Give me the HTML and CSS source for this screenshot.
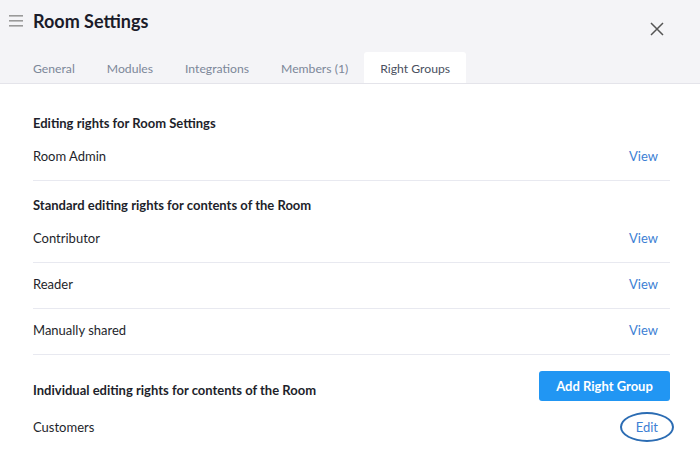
FILE: index.html
```html
<!DOCTYPE html>
<html lang="en">
<head>
    <meta charset="UTF-8">
    <meta name="viewport" content="width=device-width, initial-scale=1.0">
    <title>Room Settings</title>
    <link rel="stylesheet" href="styles.css">
</head>
<body>

<div class="header">
    <div class="title-row">
        <svg class="menu-icon" width="14" height="12" viewBox="0 0 14 12">
            <rect x="0" y="0" width="14" height="1.6" fill="#9a9a9a"/>
            <rect x="0" y="5" width="14" height="1.6" fill="#9a9a9a"/>
            <rect x="0" y="10" width="14" height="1.6" fill="#9a9a9a"/>
        </svg>
        <h1 class="title">Room Settings</h1>
        <svg class="close-icon" width="14" height="14" viewBox="0 0 14 14">
            <path d="M1 1 L13 13 M13 1 L1 13" stroke="#555" stroke-width="1.5"/>
        </svg>
    </div>
    <div class="tabs">
        <div class="tab">General</div>
        <div class="tab">Modules</div>
        <div class="tab">Integrations</div>
        <div class="tab">Members (1)</div>
        <div class="tab active">Right Groups</div>
    </div>
</div>

<div class="content">
    <div class="section">
        <div class="section-title">Editing rights for Room Settings</div>
        <div class="row">
            <span>Room Admin</span>
            <a class="link">View</a>
        </div>
    </div>

    <div class="section">
        <div class="section-title">Standard editing rights for contents of the Room</div>
        <div class="row">
            <span>Contributor</span>
            <a class="link">View</a>
        </div>
        <div class="row">
            <span>Reader</span>
            <a class="link">View</a>
        </div>
        <div class="row">
            <span>Manually shared</span>
            <a class="link">View</a>
        </div>
    </div>

    <div class="section last">
        <div class="section-head">
            <div class="section-title">Individual editing rights for contents of the Room</div>
            <button class="btn">Add Right Group</button>
        </div>
        <div class="row">
            <span>Customers</span>
            <a class="link marked">Edit</a>
        </div>
    </div>
</div>

</body>
</html>
```

FILE: styles.css
```css
body {
    margin: 0;
    font-family: Lato, "Open Sans", sans-serif;
    font-size: 13px;
    color: #1e1f2b;
    background-color: #fff;
    width: 700px;
    height: 450px;
    overflow: hidden;
}

.header {
    background-color: #f4f4f7;
    border-bottom: 1px solid #e4e4ea;
}

.title-row {
    display: flex;
    align-items: center;
    height: 44px;
    padding-left: 9px;
}

.menu-icon {
    margin-right: 10px;
    margin-top: -3px;
}

.title {
    margin: 0;
    margin-top: -3px;
    font-size: 18px;
    font-weight: 700;
    color: #1b1c2a;
    flex: 1;
}

.close-icon {
    margin-right: 36px;
    margin-top: 14px;
}

.tabs {
    display: flex;
    padding-left: 17px;
    margin-top: 8px;
}

.tab {
    padding: 0 16px;
    height: 31px;
    line-height: 34px;
    font-size: 12.2px;
    color: #7c8799;
}

.tab.active {
    background-color: #fff;
    color: #4a5060;
    border-radius: 3px 3px 0 0;
}

.content {
    padding: 15px 30px 0 33px;
}

.section {
    border-bottom: 1px solid #e8e9f0;
}

.section.last {
    border-bottom: none;
}

.section-title {
    padding-top: 15px;
    padding-bottom: 3px;
    line-height: 18px;
    font-weight: 700;
    color: #1e1f2b;
}

.row {
    display: flex;
    justify-content: space-between;
    align-items: flex-start;
    height: 45px;
    box-sizing: border-box;
    padding: 12px 12px 0 0;
    line-height: 18px;
}

.section .row + .row {
    border-top: 1px solid #e8e9f0;
    height: 46px;
}

.link {
    color: #3d80d4;
    cursor: pointer;
    position: relative;
}

.link.marked::after {
    content: "";
    position: absolute;
    left: -16px;
    top: -6px;
    width: 50px;
    height: 26px;
    border: 2px solid #2b6cb3;
    border-radius: 50%;
}

.section-head {
    display: flex;
    justify-content: space-between;
    align-items: flex-end;
    padding-top: 16px;
}

.section-head .section-title {
    padding: 0 0 2px 0;
}

.btn {
    background-color: #2196f3;
    color: #fff;
    border: none;
    border-radius: 3px;
    font-family: inherit;
    font-size: 13px;
    font-weight: 700;
    width: 131px;
    height: 30px;
    cursor: pointer;
}

.section.last .row {
    margin-top: 5px;
}
```
